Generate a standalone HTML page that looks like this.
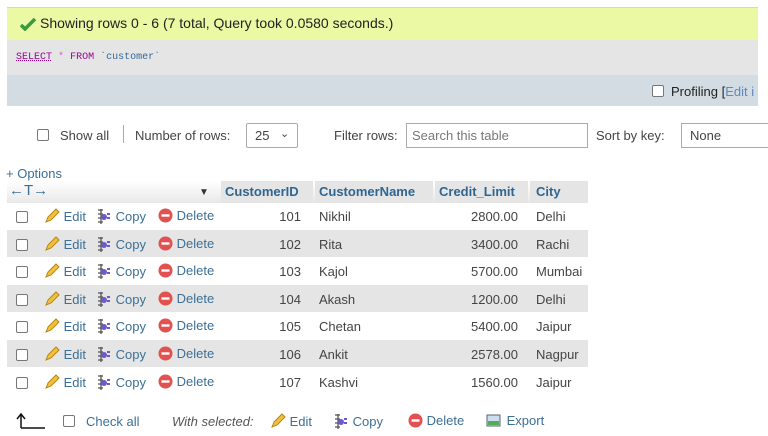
<!DOCTYPE html>
<html><head><meta charset="utf-8"><style>
*{box-sizing:border-box;margin:0;padding:0}
body{width:768px;height:436px;overflow:hidden;background:#fff;font-family:"Liberation Sans",Arial,sans-serif;font-size:13px;color:#444;position:relative}
.a{position:absolute;white-space:nowrap}
.cb{position:absolute;width:12px;height:12px;border:1px solid #777;border-radius:2px;background:#fff}
.row{position:absolute;left:7px;width:581px;height:27px}
.g{background:#e5e5e5}
.lk{color:#3d6f96}
.h{color:#2f6591;font-weight:bold}
</style></head><body>
<div class="a" style="left:7px;top:7px;width:751px;height:33px;background:#ebf8a4;border-top:1px solid #d6e38a"></div>
<svg class="a" style="left:20px;top:17px" width="16" height="14"><path d="M1 8 L5 12 L15 2" stroke="#3b9a3b" stroke-width="3.5" fill="none"/></svg>
<div class="a" style="left:40px;top:15px;font-size:14px;color:#222">Showing rows 0 - 6 (7 total, Query took 0.0580 seconds.)</div>
<div class="a" style="left:7px;top:40px;width:751px;height:35px;background:#e5e5e5"></div>
<div class="a" style="left:16px;top:52px;font-family:'Liberation Mono',monospace;font-size:10px"><span style="color:#909;text-decoration:underline dotted">SELECT</span> <span style="color:#c6c">*</span> <span style="color:#909">FROM</span> <span style="color:#369">`customer`</span></div>
<div class="a" style="left:7px;top:75px;width:751px;height:31px;background:#d3dce3"></div>
<div class="cb" style="left:652px;top:85px"></div>
<div class="a" style="left:671px;top:84px;font-size:13px;color:#222">Profiling [<span style="color:#5a8ac0">Edit i</span></div>

<div class="cb" style="left:37px;top:129px"></div>
<div class="a" style="left:60px;top:128px">Show all</div>
<div class="a" style="left:123px;top:125px;width:1px;height:18px;background:#aaa"></div>
<div class="a" style="left:135px;top:128px">Number of rows:</div>
<div class="a" style="left:246px;top:123px;width:52px;height:25px;border:1px solid #aaa;border-radius:2px;padding:4px 8px">25 <span style="position:absolute;left:33px;top:3px;font-size:11px">&#8964;</span></div>
<div class="a" style="left:334px;top:128px">Filter rows:</div>
<div class="a" style="left:406px;top:123px;width:182px;height:25px;border:1px solid #aaa;padding:4px 5px;color:#777">Search this table</div>
<div class="a" style="left:596px;top:128px">Sort by key:</div>
<div class="a" style="left:681px;top:123px;width:90px;height:25px;border:1px solid #aaa;padding:4px 8px">None</div>

<div class="a lk" style="left:6px;top:166px">+ Options</div>
<div class="a" style="left:7px;top:181px;width:581px;height:22px;background:linear-gradient(#fff,#e8e8e8)"></div>
<div class="a" style="left:221px;top:181px;width:92px;height:22px;background:#e5e5e5"></div>
<div class="a" style="left:315px;top:181px;width:118px;height:22px;background:#e5e5e5"></div>
<div class="a" style="left:435px;top:181px;width:93px;height:22px;background:#e5e5e5"></div>
<div class="a" style="left:530px;top:181px;width:58px;height:22px;background:#e5e5e5"></div>
<div class="a lk" style="left:9px;top:182px;font-size:15px">&larr;T&rarr;</div>
<div class="a" style="left:199px;top:187px;font-size:10px;color:#333">&#9660;</div>
<div class="a h" style="left:225px;top:184px">CustomerID</div>
<div class="a h" style="left:319px;top:184px">CustomerName</div>
<div class="a h" style="left:439px;top:184px">Credit_Limit</div>
<div class="a h" style="left:536px;top:184px">City</div>

<div id="rows"></div>
<script>
var d=[[101,"Nikhil","2800.00","Delhi"],[102,"Rita","3400.00","Rachi"],[103,"Kajol","5700.00","Mumbai"],[104,"Akash","1200.00","Delhi"],[105,"Chetan","5400.00","Jaipur"],[106,"Ankit","2578.00","Nagpur"],[107,"Kashvi","1560.00","Jaipur"]];
var pen='<svg width="16" height="16" style="vertical-align:-3px"><path d="M2 14 L4 9 L12 1 L15 4 L7 12 Z" fill="#f0c040" stroke="#b8860b"/></svg>';
var cp='<svg width="16" height="16" style="vertical-align:-3px"><path d="M2 2h5M2 6h5M2 10h5M2 14h5M5 1v15" stroke="#555" stroke-width="1.3"/><circle cx="8" cy="9" r="3" fill="#6a5acd"/><path d="M11 6h3M11 10h3" stroke="#6a5acd" stroke-width="2"/></svg>';
var del='<svg width="15" height="15" style="vertical-align:-3px"><circle cx="7.5" cy="7.5" r="7" fill="#e25050"/><rect x="3.5" y="6.3" width="8" height="2.4" fill="#fff"/></svg>';
var h='';
for(var i=0;i<7;i++){var t=202+i*27.6;
h+='<div class="row'+(i%2?' g':'')+'" style="top:'+t+'px"></div>';
h+='<div class="cb" style="left:16px;top:'+(t+9)+'px"></div>';
h+='<div class="a lk" style="left:44px;top:'+(t+6)+'px">'+pen+' Edit</div>';
h+='<div class="a lk" style="left:96px;top:'+(t+6)+'px">'+cp+' Copy</div>';
h+='<div class="a lk" style="left:158px;top:'+(t+6)+'px">'+del+' Delete</div>';
h+='<div class="a" style="left:260px;width:41px;text-align:right;top:'+(t+7)+'px">'+d[i][0]+'</div>';
h+='<div class="a" style="left:319px;top:'+(t+7)+'px">'+d[i][1]+'</div>';
h+='<div class="a" style="left:450px;width:68px;text-align:right;top:'+(t+7)+'px">'+d[i][2]+'</div>';
h+='<div class="a" style="left:536px;top:'+(t+7)+'px">'+d[i][3]+'</div>';}
document.getElementById('rows').innerHTML=h;
</script>
<svg class="a" style="left:16px;top:410px" width="30" height="20"><path d="M5 18V5M1 9L5 4L9 9M5 18H29" stroke="#111" stroke-width="1.5" fill="none"/></svg>
<div class="cb" style="left:63px;top:415px"></div>
<div class="a lk" style="left:86px;top:414px">Check all</div>
<div class="a" style="left:172px;top:414px;font-style:italic;color:#555">With selected:</div>
<div class="a lk" style="left:270px;top:413px"><svg width="16" height="16" style="vertical-align:-3px"><path d="M2 14 L4 9 L12 1 L15 4 L7 12 Z" fill="#f0c040" stroke="#b8860b"/></svg> Edit</div>
<div class="a lk" style="left:333px;top:413px"><svg width="16" height="16" style="vertical-align:-3px"><path d="M2 2h5M2 6h5M2 10h5M2 14h5M5 1v15" stroke="#555" stroke-width="1.3"/><circle cx="8" cy="9" r="3" fill="#6a5acd"/><path d="M11 6h3M11 10h3" stroke="#6a5acd" stroke-width="2"/></svg> Copy</div>
<div class="a lk" style="left:408px;top:413px"><svg width="15" height="15" style="vertical-align:-3px"><circle cx="7.5" cy="7.5" r="7" fill="#e25050"/><rect x="3.5" y="6.3" width="8" height="2.4" fill="#fff"/></svg> Delete</div>
<div class="a lk" style="left:486px;top:413px"><svg width="17" height="15" style="vertical-align:-3px"><rect x="1" y="2" width="13" height="11" fill="#cde" stroke="#567"/><rect x="2" y="8" width="11" height="4" fill="#5a5"/></svg> Export</div>
</body></html>
